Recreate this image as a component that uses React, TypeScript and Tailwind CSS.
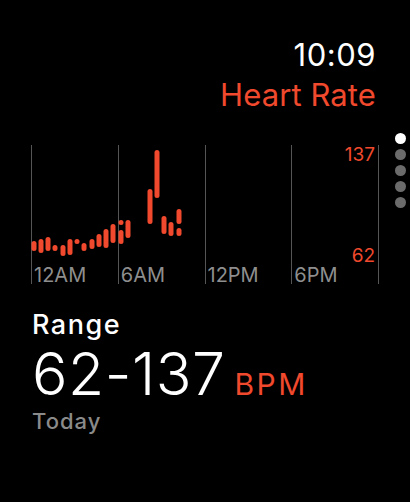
import React from "react";

const bars: [number, number, number][] = [
  [35, 241, 251],
  [42, 239, 253],
  [49, 237, 251],
  [56, 245, 251],
  [64, 245, 256],
  [71, 239, 255],
  [78, 239, 244],
  [85, 243, 251],
  [93, 239, 249],
  [100, 234, 247],
  [107, 229, 248],
  [114, 224, 243],
  [122, 220, 225],
  [122, 230, 244],
  [129, 220, 238],
  [151, 189, 224],
  [158, 150, 198],
  [165, 216, 234],
  [172, 222, 236],
  [180, 209, 224],
  [180, 228, 236],
];

const labels = ["12AM", "6AM", "12PM", "6PM"];

export default function App() {
  return (
    <div
      className="relative w-[410px] h-[502px] bg-black overflow-hidden text-white"
      style={{ fontFamily: "Inter, 'Liberation Sans', sans-serif" }}
    >
      {/* page dots */}
      <div className="absolute right-[4px] top-[133px] flex flex-col gap-[5px]">
        <div className="w-[11px] h-[11px] rounded-full bg-white" />
        <div className="w-[11px] h-[11px] rounded-full bg-[#6b6b6b]" />
        <div className="w-[11px] h-[11px] rounded-full bg-[#6b6b6b]" />
        <div className="w-[11px] h-[11px] rounded-full bg-[#6b6b6b]" />
        <div className="w-[11px] h-[11px] rounded-full bg-[#6b6b6b]" />
      </div>

      {/* header */}
      <div className="flex flex-col items-end pr-[34px] pt-[39px]">
        <div className="text-[31px] leading-[31px] font-normal tracking-[0.5px]">10:09</div>
        <div className="text-[31px] leading-[31px] mt-[9px] text-[#f0492d] tracking-[0.1px]">Heart Rate</div>
      </div>

      {/* chart */}
      <div className="relative ml-[31px] mt-[35px] w-[348px] h-[139px] flex border-r border-[#555]">
        {labels.map((l) => (
          <div key={l} className="flex-1 border-l border-[#555] flex flex-col justify-end pl-[2px]">
            <span className="text-[20px] leading-[17px] text-[#8e8e8e]">{l}</span>
          </div>
        ))}
        <div className="absolute right-[3px] top-0 h-[120px] flex flex-col justify-between items-end text-[#f0492d] text-[19px] leading-[19px]">
          <span>137</span>
          <span>62</span>
        </div>
        <svg className="absolute left-[-1px] top-0" width="348" height="139" viewBox="31 145 348 139">
          {bars.map(([x, y1, y2], i) => (
            <rect key={i} x={x - 2.5} y={y1} width={5} height={y2 - y1} rx={2.5} fill="#f0492d" />
          ))}
        </svg>
      </div>

      {/* bottom */}
      <div className="pl-[32px] mt-[27px] flex flex-col">
        <div className="text-[27px] leading-[27px] font-medium tracking-[1.5px]">Range</div>
        <div className="flex items-baseline gap-[9px] mt-[6px]">
          <span className="text-[59px] leading-[59px] font-light tracking-[0.5px]">62-137</span>
          <span className="text-[30px] leading-[30px] text-[#f0492d] tracking-[2.5px]">BPM</span>
        </div>
        <div className="text-[22px] leading-[22px] mt-[7px] font-medium text-[#8a8a8a] tracking-[1px]">Today</div>
      </div>
    </div>
  );
}
